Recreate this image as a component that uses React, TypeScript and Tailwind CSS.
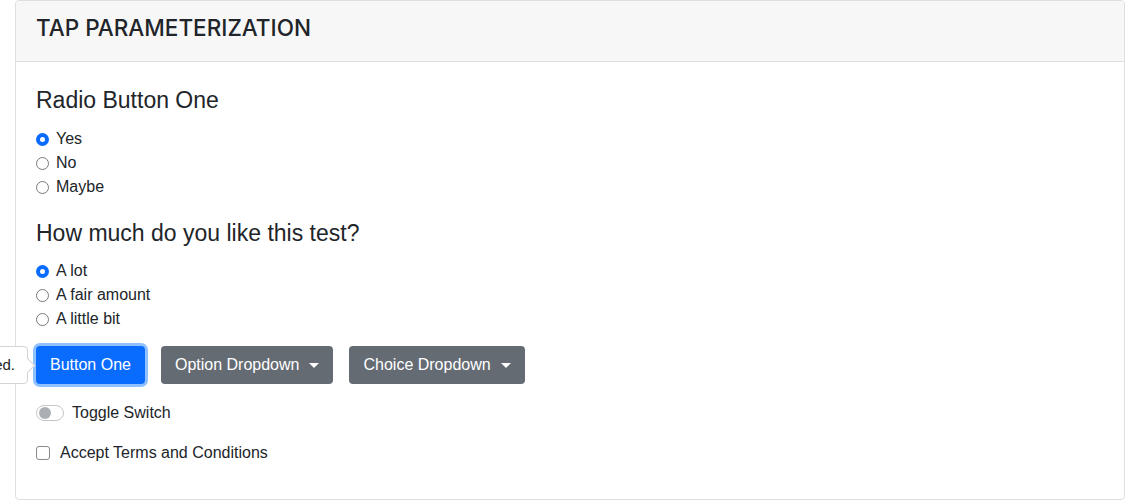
const radios1 = ['Yes', 'No', 'Maybe'];
const radios2 = ['A lot', 'A fair amount', 'A little bit'];

function Radio({ label, checked }: { label: string; checked?: boolean }) {
  return (
    <label className="flex items-center h-6">
      <span
        className={
          checked
            ? 'w-[13px] h-[13px] rounded-full bg-[#0a6cff] flex items-center justify-center'
            : 'w-[13px] h-[13px] rounded-full border border-[#7a7a7a] bg-white'
        }
      >
        {checked && <span className="w-[5px] h-[5px] rounded-full bg-white" />}
      </span>
      <span className="ml-[7px]">{label}</span>
    </label>
  );
}

function Caret() {
  return <span className="ml-[10px] inline-block w-0 h-0 border-l-[5px] border-r-[5px] border-t-[5px] border-l-transparent border-r-transparent border-t-white" />;
}

export default function App() {
  return (
    <div className="w-[1140px] h-[501px] bg-white text-[#212529] overflow-hidden" style={{ fontFamily: '"Liberation Sans", Arial, sans-serif' }}>
      <div className="ml-[15px] w-[1110px] h-[500px] border border-[#dfdfdf] rounded-[4px]">
        <div className="h-[61px] bg-[#f7f7f7] border-b border-[#dfdfdf] px-5 pt-[14px] rounded-t-[4px]">
          <h4 className="text-[22.5px] font-medium leading-[26px] font-['Inter',sans-serif]">TAP PARAMETERIZATION</h4>
        </div>
        <div className="px-5 pt-[24px] text-[16px]">
          <h5 className="text-[23px] leading-[28px]">Radio Button One</h5>
          <div className="mt-[13px]">
            {radios1.map((r, i) => (
              <Radio key={r} label={r} checked={i === 0} />
            ))}
          </div>
          <h5 className="text-[23px] leading-[28px] mt-[20px]">How much do you like this test?</h5>
          <div className="mt-[12px]">
            {radios2.map((r, i) => (
              <Radio key={r} label={r} checked={i === 0} />
            ))}
          </div>
          <div className="relative flex gap-4 mt-[15px]">
            <div className="absolute right-[calc(100%+8px)] top-0 h-[38px] flex items-center">
              <div className="relative h-[38px] px-3 flex items-center whitespace-nowrap bg-white border border-[#d4d4d4] rounded-[4px] text-[15px]">
                Button clicked.
                <span className="absolute -right-[6px] top-[13px] w-[11px] h-[11px] bg-white border-t border-r border-[#d4d4d4] rotate-45" />
              </div>
            </div>
            <button className="h-[38px] px-[14px] rounded-[4px] bg-[#0a6cff] text-white ring-[3px] ring-[#8fc0ff]">Button One</button>
            <button className="h-[38px] px-[14px] rounded-[4px] bg-[#646b73] text-white flex items-center">
              Option Dropdown
              <Caret />
            </button>
            <button className="h-[38px] px-[14px] rounded-[4px] bg-[#646b73] text-white flex items-center">
              Choice Dropdown
              <Caret />
            </button>
          </div>
          <div className="flex items-center mt-[17px] h-6">
            <span className="w-[28px] h-[16px] rounded-full border border-[#c6c6c6] bg-white flex items-center px-[2px]">
              <span className="w-[12px] h-[12px] rounded-full bg-[#abafb4]" />
            </span>
            <span className="ml-2">Toggle Switch</span>
          </div>
          <div className="flex items-center mt-[16px] h-6">
            <span className="w-[14px] h-[14px] rounded-[3px] border border-[#8a8a8a] bg-white" />
            <span className="ml-[10px]">Accept Terms and Conditions</span>
          </div>
        </div>
      </div>
    </div>
  );
}
